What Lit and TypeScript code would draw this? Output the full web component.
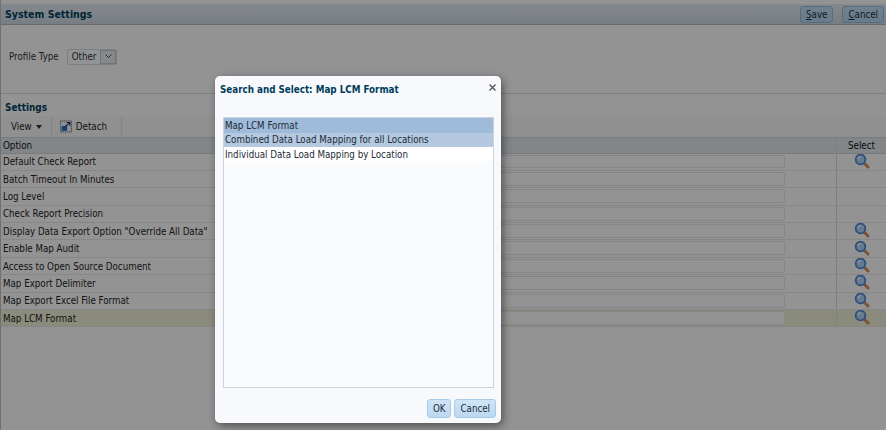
import { LitElement, html, css, svg } from "lit";
import { customElement } from "lit/decorators.js";

const rows: [string, boolean][] = [
  ["Default Check Report", true],
  ["Batch Timeout In Minutes", false],
  ["Log Level", false],
  ["Check Report Precision", false],
  ['Display Data Export Option "Override All Data"', true],
  ["Enable Map Audit", true],
  ["Access to Open Source Document", true],
  ["Map Export Delimiter", true],
  ["Map Export Excel File Format", true],
  ["Map LCM Format", true],
];

const magnifier = svg`<svg class="mag" width="16" height="16" viewBox="0 0 16 16">
  <path d="M9.5 9.5 L14 14" stroke="#c98a62" stroke-width="3" stroke-linecap="round"/>
  <circle cx="6.5" cy="6.5" r="4.8" fill="#a9cdf2" stroke="#4a82c8" stroke-width="1.8"/>
  <path d="M4 6 A3 3 0 0 1 7 3.6" fill="none" stroke="#e6f3ff" stroke-width="1.2"/>
</svg>`;

@customElement("app-root")
export class AppRoot extends LitElement {
  static styles = css`
    :host {
      display: block;
      position: relative;
      width: 886px;
      height: 430px;
      overflow: hidden;
      background: #f6f6f6;
      font-family: "DejaVu Sans Condensed", "DejaVu Sans", sans-serif;
      font-stretch: condensed;
      font-size: 9.7px;
      color: #222;
    }
    .page { display: flex; flex-direction: column; height: 100%; padding-top: 4px; box-sizing: border-box; border-left: 1px solid #b5bcc4; }
    .top { display: flex; align-items: center; height: 21px; box-sizing: border-box; padding: 0 2px 0 4px; background: linear-gradient(#dde4ea, #c7d1da); border-bottom: 1px solid #aab3bc; flex: none; }
    .top h1 { margin: 0; font-size: 10.5px; font-weight: 700; color: #003d5b; flex: 1; }
    .btn { box-sizing: border-box; height: 17px; padding: 0 5px; display: flex; align-items: center; justify-content: center; border: 1px solid #8fb3d3; border-radius: 3px; background: linear-gradient(#bcd7ee, #afcee9); color: #1d2c36; margin-left: 9px; }
    .btn u { text-decoration: underline; }
    .profile { height: 69px; flex: none; display: flex; align-items: center; padding-left: 8px; gap: 8px; border-bottom: 1px solid #d4d4d4; box-sizing: border-box; padding-bottom: 5px; color: #333; }
    .sel { display: flex; align-items: center; height: 14px; border: 1px solid #cfd5da; border-radius: 2px; padding-left: 4px; gap: 4px; background: #f3f5f7; }
    .sel .arrow { width: 16px; height: 14px; box-sizing: border-box; border: 1px solid #b9c0c6; background: #dfe4e8; display: flex; align-items: center; justify-content: center; }
    .settings { font-weight: 700; color: #003d5b; font-size: 9.9px; padding: 8px 0 0 4px; height: 22px; box-sizing: border-box; flex: none; }
    .toolbar { display: flex; height: 21px; flex: none; background: #f1f1f1; align-items: stretch; }
    .tool { display: flex; align-items: center; gap: 4px; padding: 0 14px 0 8px; border-right: 1px solid #dcdcdc; }
    .tool.view { gap: 3px; padding-left: 10px; padding-right: 8px; width: 51px; box-sizing: border-box; }
    .tool.detach { width: 70px; box-sizing: border-box; }
    .caret { width: 0; height: 0; border-left: 3.5px solid transparent; border-right: 3.5px solid transparent; border-top: 4px solid #333; margin-left: 1px; }
    .grid { display: flex; flex-direction: column; }
    .row { display: grid; grid-template-columns: 836px 1fr; height: 17.4px; border-bottom: 1px solid #e2e2e2; box-sizing: border-box; align-items: center; }
    .row.head { height: 16.5px; background: #d9dfe4; border-top: 1px solid #c8ced3; border-bottom: 1px solid #c8ced3; color: #111; }
    .row.hl { background: #e8e8d0; }
    .opt { display: flex; align-items: center; height: 100%; border-right: 1px solid #d4d4d4; padding-left: 2px; box-sizing: border-box; position: relative; }
    .box { position: absolute; left: 480px; right: 51px; top: 1px; bottom: 1.5px; border: 1px solid #e0e0e0; border-radius: 2px; box-sizing: border-box; background: #f6f6f6; }
    .sel-cell { display: flex; justify-content: center; align-items: center; height: 100%; overflow: hidden; }
    .mag { display: block; margin-bottom: 2px; }
    .scrim { position: absolute; inset: 0; background: rgba(0,0,0,.4); }
    .dialog { position: absolute; left: 215px; top: 76px; width: 286px; height: 347px; box-sizing: border-box; border-radius: 5px; background: #f7f9fc; box-shadow: 2px 3px 8px rgba(0,0,0,.45); display: flex; flex-direction: column; padding: 0 5px 5px 5px; }
    .dlg-head { display: flex; justify-content: space-between; align-items: center; height: 25px; padding-top: 2px; box-sizing: border-box; flex: none; }
    .dlg-head h2 { margin: 0; font-size: 9.75px; font-weight: 700; color: #003d5b; }
    .close { width: 7px; height: 7px; display: block; margin-bottom: 5px; }
    .list { margin: 16px 2px 0 3px; flex: 1; border: 1px solid #cbd3db; background: #fafbfc; }
    .li { height: 14.4px; padding-left: 1px; display: flex; align-items: center; color: #1d2c36; }
    .li.h { background: #a0bad9; height: 14.5px; }
    .li.s { background: #b4c8e0; }
    .li.w { background: #fff; }
    .foot { display: flex; justify-content: flex-end; gap: 3px; padding-top: 11px; flex: none; }
    .foot .btn { margin: 0; height: 19px; min-width: 24px; padding: 0 5px; background: linear-gradient(#cfe4f7, #bcd8f1); border-color: #a9cbe8; }
  `;

  render() {
    return html`
      <div class="page">
        <div class="top">
          <h1>System Settings</h1>
          <div class="btn"><span><u>S</u>ave</span></div>
          <div class="btn"><span><u>C</u>ancel</span></div>
        </div>
        <div class="profile">
          <span>Profile Type</span>
          <div class="sel"><span>Other</span>
            <div class="arrow"><svg width="7" height="5" viewBox="0 0 7 5"><path d="M.5 .5 L3.5 3.5 L6.5 .5" fill="none" stroke="#444" stroke-width="1"/></svg></div>
          </div>
        </div>
        <div class="settings">Settings</div>
        <div class="toolbar">
          <div class="tool view"><span>View</span><span class="caret"></span></div>
          <div class="tool detach">
            <svg width="15" height="15" viewBox="0 0 15 15"><rect x=".5" y=".5" width="14" height="14" fill="#e7eef7" stroke="#39424f" stroke-dasharray="1.5 1"/><rect x="2" y="7" width="7" height="6" fill="#2f6bb7"/><path d="M6 8 L12 3 M8.5 2.5 H12.5 V6.5" fill="none" stroke="#1c2f50" stroke-width="1.4"/></svg>
            <span>Detach</span>
          </div>
        </div>
        <div class="grid">
          <div class="row head"><div class="opt">Option</div><div class="sel-cell">Select</div></div>
          ${rows.map(([t, m], i) => html`
            <div class="row ${i === 9 ? "hl" : ""}">
              <div class="opt">${t}<div class="box"></div></div>
              <div class="sel-cell">${m ? magnifier : ""}</div>
            </div>`)}
        </div>
      </div>
      <div class="scrim"></div>
      <div class="dialog">
        <div class="dlg-head">
          <h2>Search and Select: Map LCM Format</h2>
          <svg class="close" viewBox="0 0 7 7"><path d="M.5 .5 L6.5 6.5 M6.5 .5 L.5 6.5" stroke="#555" stroke-width="1.4"/></svg>
        </div>
        <div class="list">
          <div class="li h">Map LCM Format</div>
          <div class="li s">Combined Data Load Mapping for all Locations</div>
          <div class="li w">Individual Data Load Mapping by Location</div>
        </div>
        <div class="foot">
          <div class="btn">OK</div>
          <div class="btn">Cancel</div>
        </div>
      </div>
    `;
  }
}
